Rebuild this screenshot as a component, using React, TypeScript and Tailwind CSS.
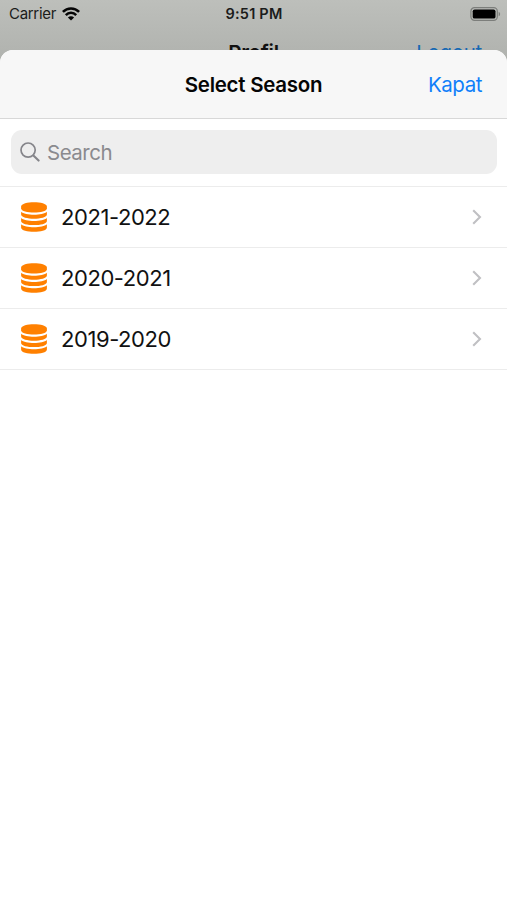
import React from 'react';

type Season = {
  id: number;
  name: string;
};

const seasons: Season[] = [
  { id: 1, name: '2021-2022' },
  { id: 2, name: '2020-2021' },
  { id: 3, name: '2019-2020' },
];

const WifiIcon = () => (
  <svg width="18" height="14" viewBox="0 0 18 14" fill="none" stroke="#050505" strokeWidth="2.5">
    <path d="M0.9 4.9C5.4 0.2 12.6 0.2 17.1 4.9" />
    <path d="M3.8 8.1C6.7 5.1 11.3 5.1 14.2 8.1" />
    <path d="M9 13.6L5.9 10.4C7.7 8.8 10.3 8.8 12.1 10.4Z" fill="#050505" stroke="none" />
  </svg>
);

const BatteryIcon = () => (
  <svg width="31" height="14" viewBox="0 0 31 14" fill="none">
    <rect x="0.9" y="0.7" width="26.4" height="12.6" rx="3.6" stroke="#7c7e7b" strokeWidth="1.2" />
    <rect x="2.7" y="2.4" width="22.8" height="9.2" rx="1.9" fill="#000" />
    <path d="M28.7 4.7C30.6 5.5 30.6 8.5 28.7 9.3Z" fill="#7c7e7b" />
  </svg>
);

const SearchIcon = () => (
  <svg width="20" height="20" viewBox="0 0 20 20" fill="none" stroke="#85858a" strokeLinecap="round">
    <circle cx="8.1" cy="8.1" r="7.1" strokeWidth="1.7" />
    <path d="M13.4 13.4L18.6 18.6" strokeWidth="2.1" />
  </svg>
);

const StackIcon = () => (
  <svg width="26" height="30" viewBox="0 0 26 30" fill="#ff8000">
    <path d="M0.1 4.6C0.1 -1.2 25.9 -1.2 25.9 4.6V6.2C25.9 12 0.1 12 0.1 6.2Z" />
    <path d="M0.1 9.7C4 13.6 22 13.6 25.9 9.7V12.6C25.9 18.2 0.1 18.2 0.1 12.6Z" />
    <path d="M0.1 16C4 19.9 22 19.9 25.9 16V18.9C25.9 24.5 0.1 24.5 0.1 18.9Z" />
    <path d="M0.1 22.3C4 26.2 22 26.2 25.9 22.3V25.4C25.9 31.2 0.1 31.2 0.1 25.4Z" />
  </svg>
);

const ChevronIcon = () => (
  <svg width="10" height="16" viewBox="0 0 10 16" fill="none" stroke="#c0c0c3" strokeWidth="2.1">
    <path d="M1.2 1.2L8 8L1.2 14.8" />
  </svg>
);

const SeasonRow: React.FC<{ season: Season }> = ({ season }) => (
  <li className="flex h-[61.3px] items-center border-b-[1.5px] border-[#ececec] pr-[25px] pl-[21px]">
    <StackIcon />
    <span className="ml-[14px] flex-1 text-[22px] leading-7 tracking-[-0.43px] text-[#111]">
      {season.name}
    </span>
    <ChevronIcon />
  </li>
);

export default function App() {
  return (
    <div className="flex h-[900px] w-full flex-col overflow-hidden bg-white font-['Inter',sans-serif]">
      {/* SCREEN BEHIND THE SHEET */}
      <div className="h-[64px] shrink-0 overflow-hidden bg-linear-to-b from-[#bdbfbb] to-[#afb1ad]">
        <div className="grid h-[27px] grid-cols-3 items-center pr-[6px] pl-[9px] text-[#1b1c1b]">
          <div className="flex items-center gap-[6px] text-[15px]">
            <span className="leading-5 tracking-[-0.3px]">Carrier</span>
            <WifiIcon />
          </div>
          <span className="pr-[2px] text-center text-[14.5px] leading-5 font-semibold tracking-[0.2px]">
            9:51 PM
          </span>
          <div className="flex justify-end">
            <BatteryIcon />
          </div>
        </div>
        <div className="grid h-[52px] grid-cols-3 items-center px-[25px] text-[20.5px] tracking-[-0.3px]">
          <span className="col-start-2 text-center font-semibold text-[#111]">Profil</span>
          <span className="text-right text-[#1769b3]">Logout</span>
        </div>
      </div>

      {/* SHEET */}
      <div className="relative -mt-[14px] flex-1 overflow-hidden rounded-t-[13px] bg-white">
        <div className="grid h-[69px] grid-cols-[1fr_auto_1fr] items-center border-b border-[#d8d8d8] bg-[#f7f7f7] px-[25px] pt-[2px]">
          <h1 className="col-start-2 text-[20.5px] leading-7 font-semibold tracking-[-0.27px] text-[#050505]">
            Select Season
          </h1>
          <button className="text-right text-[20.5px] leading-7 tracking-[-0.45px] text-[#0f7ffa]">
            Kapat
          </button>
        </div>

        <div className="h-[67.5px] border-b-[1.5px] border-[#ececec] pt-[11px] pr-[10px] pl-[11px]">
          <div className="flex h-[44px] items-center gap-[7px] rounded-[11px] bg-[#eeeeee] pl-[9px]">
            <SearchIcon />
            <span className="pt-[2px] text-[20.5px] leading-7 tracking-[-0.5px] text-[#8a8a8e]">
              Search
            </span>
          </div>
        </div>

        <ul>
          {seasons.map((season) => (
            <SeasonRow key={season.id} season={season} />
          ))}
        </ul>
      </div>
    </div>
  );
}
